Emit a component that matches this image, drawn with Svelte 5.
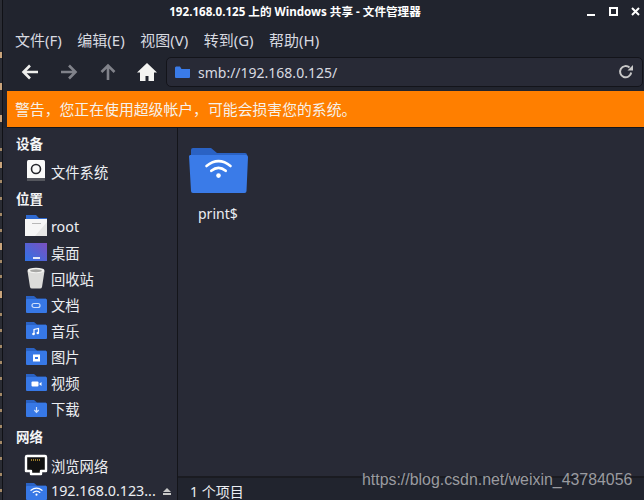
<script>
  const menus = ['文件(F)', '编辑(E)', '视图(V)', '转到(G)', '帮助(H)'];
  const big = [[52, 6], [83, 7], [115, 7], [162, 6], [243, 7], [291, 7]];
  const small = [148, 180, 197, 213, 229, 260, 275, 313, 329, 345, 361, 377, 393, 409, 425, 441, 457, 473, 489];
  const folders = [
    { name: '文档', glyph: 'link' },
    { name: '音乐', glyph: 'music' },
    { name: '图片', glyph: 'image' },
    { name: '视频', glyph: 'video' },
    { name: '下载', glyph: 'down' }
  ];
</script>

{#snippet wifi(cx, cy, s)}
  <g fill="none" stroke="#fff" stroke-linecap="round" stroke-width={2.2 * s}>
    <path d="M{cx - 10 * s} {cy - 5 * s}Q{cx} {cy - 13 * s} {cx + 10 * s} {cy - 5 * s}" />
    <path d="M{cx - 6 * s} {cy - 1 * s}Q{cx} {cy - 6 * s} {cx + 6 * s} {cy - 1 * s}" />
  </g>
  <circle {cx} cy={cy + 3 * s} r={1.9 * s} fill="#fff" />
{/snippet}

{#snippet smallFolder(glyph)}
  <svg class="icon" width="24" height="20" viewBox="0 0 24 20">
    <path d="M2 16V2h8l3 2.500h9V16z" fill="#2a62c4" />
    <rect x="2" y="5" width="21" height="14" rx="1" fill="#3778e6" />
    {#if glyph === 'link'}
      <rect x="8" y="9.500" width="8" height="4" rx="2" fill="none" stroke="#cfe0fb" stroke-width="1.200" />
    {:else if glyph === 'music'}
      <path d="M10 14V9.500l4.500-1V13" fill="none" stroke="#fff" stroke-width="1.200" />
      <circle cx="9.500" cy="14" r="1.300" fill="#fff" /><circle cx="13.800" cy="13" r="1.300" fill="#fff" />
    {:else if glyph === 'image'}
      <rect x="9" y="8.500" width="7" height="7" fill="#fff" />
      <rect x="11" y="11" width="3" height="2" fill="#3778e6" />
    {:else if glyph === 'video'}
      <rect x="7.500" y="9.500" width="7" height="5" rx="1" fill="#fff" />
      <path d="M15 12l2.500-2v4z" fill="#fff" />
    {:else if glyph === 'down'}
      <path d="M12.500 9v5M10.300 12l2.200 2.300 2.200-2.300" fill="none" stroke="#cfe0fb" stroke-width="1.200" />
    {:else if glyph === 'wifi'}
      {@render wifi(12.500, 12, 0.55)}
    {/if}
  </svg>
{/snippet}

<div class="screen">
  <svg class="strip" width="7" height="500" viewBox="0 0 7 500">
    <rect width="2" height="500" fill="#2a2c34" />
    <rect x="2" width="1" height="500" fill="#101116" />
    <rect x="3" width="4" height="128" fill="#22252f" />
    <rect x="3" y="128" width="4" height="372" fill="#272935" />
    {#each big as [y, h]}
      <rect x="0" {y} width="2" height={h} fill="#c9a47c" />
    {/each}
    {#each small as y}
      <rect x="0" {y} width="2" height="3" fill="#a58a68" />
    {/each}
  </svg>

  <div class="window">
    <header class="top">
      <div class="titlebar">
        <span class="title">192.168.0.125 上的 Windows 共享 - 文件管理器</span>
        <div class="controls">
          <svg width="9" height="9" viewBox="0 0 9 9"><rect y="7" width="8" height="2" fill="#fff" /></svg>
          <svg width="9" height="9" viewBox="0 0 9 9"><rect x="1" y="1" width="7" height="7" fill="none" stroke="#fff" stroke-width="2" /></svg>
          <svg width="9" height="9" viewBox="0 0 9 9"><path d="M1 1l7 7M8 1l-7 7" stroke="#fff" stroke-width="2" /></svg>
        </div>
      </div>

      <nav class="menubar">
        {#each menus as m}<span>{m}</span>{/each}
      </nav>

      <div class="toolbar">
        <button class="tool" aria-label="后退">
          <svg width="20" height="20" viewBox="0 0 20 20"><path d="M18 10H4M10 3.500L3.500 10l6.500 6.500" fill="none" stroke="#eeeeec" stroke-width="2.600" /></svg>
        </button>
        <button class="tool" aria-label="前进">
          <svg width="20" height="20" viewBox="0 0 20 20"><path d="M2 10h14M10 3.500L16.500 10 10 16.500" fill="none" stroke="#80828a" stroke-width="2.600" /></svg>
        </button>
        <button class="tool" aria-label="上级">
          <svg width="20" height="20" viewBox="0 0 20 20"><path d="M10 18V4M3.500 10L10 3.500l6.500 6.500" fill="none" stroke="#80828a" stroke-width="2.600" /></svg>
        </button>
        <button class="tool" aria-label="主目录">
          <svg width="22" height="20" viewBox="0 0 22 20"><path d="M11 1L1 10.500h3V19h5.500v-5h3v5H18v-8.500h3z" fill="#f4f4f2" /></svg>
        </button>
        <div class="location">
          <svg width="15" height="12" viewBox="0 0 15 12"><path d="M0 1.500V11a1 1 0 001 1h13a1 1 0 001-1V3H6.500L5 .500H1z" fill="#3a7be8" /></svg>
          <span class="path">smb://192.168.0.125/</span>
          <svg class="reload" width="16" height="16" viewBox="0 0 16 16"><path d="M13.200 8.500A5.600 5.600 0 1 1 11.500 3.600" fill="none" stroke="#c8c8c8" stroke-width="2" /><path d="M9.500 6.500H15V1z" fill="#c8c8c8" /></svg>
        </div>
      </div>
    </header>

    <div class="warning">警告，您正在使用超级帐户，可能会损害您的系统。</div>

    <div class="body">
      <aside class="sidebar">
        <div class="heading first">设备</div>
        <div class="row">
          <svg class="icon" width="24" height="24" viewBox="0 0 24 24">
            <rect x="3" y="1" width="18" height="21" rx="1.500" fill="#fafafa" />
            <rect x="3" y="19" width="18" height="3" fill="#55575e" />
            <circle cx="12" cy="10" r="4.500" fill="none" stroke="#26272d" stroke-width="1.600" />
          </svg>
          <span>文件系统</span>
        </div>

        <div class="heading places">位置</div>
        <div class="row">
          <svg class="icon" width="24" height="24" viewBox="0 0 24 24">
            <path d="M2 12V1h10l3 3h8v8z" fill="#2f6ad2" />
            <rect x="1" y="5" width="22" height="17" fill="#f6f6f6" />
            <path d="M23 8v14H11z" fill="#e6e6e6" />
            <rect x="8" y="9" width="9" height="1" fill="#b8b8b8" />
          </svg>
          <span>root</span>
        </div>
        <div class="row">
          <svg class="icon" width="24" height="24" viewBox="0 0 24 24">
            <defs>
              <linearGradient id="desk" x1="0" y1="1" x2="1" y2="0">
                <stop offset="0" stop-color="#2f73e6" /><stop offset="1" stop-color="#7c4fc0" />
              </linearGradient>
            </defs>
            <rect x="1" y="3" width="22" height="18" fill="url(#desk)" />
            <rect x="9" y="17" width="7" height="2" fill="#e4e8f8" />
          </svg>
          <span>桌面</span>
        </div>
        <div class="row">
          <svg class="icon" width="24" height="24" viewBox="0 0 24 24">
            <path d="M3.500 5L6 21a2 2 0 002 1.500h8a2 2 0 002-1.500l2.500-16z" fill="#dcdcda" />
            <ellipse cx="12" cy="4.500" rx="8.500" ry="2.700" fill="#f2f2f0" />
            <ellipse cx="12" cy="4.800" rx="6" ry="1.500" fill="#a8a8a6" />
          </svg>
          <span>回收站</span>
        </div>
        {#each folders as f}
          <div class="row">
            {@render smallFolder(f.glyph)}
            <span>{f.name}</span>
          </div>
        {/each}

        <div class="heading network">网络</div>
        <div class="row">
          <svg class="icon" width="24" height="22" viewBox="0 0 24 22">
            <path d="M2 3a1 1 0 011-1h18a1 1 0 011 1v14h-5v3H7v-3H2z" fill="#111" stroke="#fff" stroke-width="2.400" stroke-linejoin="round" />
            <path d="M7 6h10" stroke="#c9a035" stroke-width="1.500" stroke-dasharray="1 1" />
          </svg>
          <span>浏览网络</span>
        </div>
        <div class="row last">
          {@render smallFolder('wifi')}
          <span class="ellipsis">192.168.0.123...</span>
          <svg class="eject" width="8" height="7" viewBox="0 0 8 7"><path d="M4 0L8 4H0z" fill="#c8c8c8" /><rect y="5" width="8" height="2" fill="#c8c8c8" /></svg>
        </div>
      </aside>

      <main class="content">
        <div class="files">
          <div class="file">
            <svg width="60" height="46" viewBox="0 0 60 46">
              <path d="M2 30V2a2 2 0 012-2h18l6 5h28a2 2 0 012 2v23z" fill="#2a62c4" />
              <path d="M1 7h56a2 2 0 012 2l-1.500 34a2 2 0 01-2 2H4a2 2 0 01-2-2L0 8z" fill="#3a7be8" />
              {@render wifi(29.500, 24, 1.200)}
            </svg>
            <span>print$</span>
          </div>
        </div>
        <footer class="status">1 个项目</footer>
      </main>
    </div>
  </div>

  <div class="watermark">https://blog.csdn.net/weixin_43784056</div>
</div>

<style>
  :global(body) {
    margin: 0;
    background: #282a36;
  }

  .screen {
    position: relative;
    display: flex;
    width: 644px;
    height: 500px;
    overflow: hidden;
    font-family: "Noto Sans", "Noto Sans CJK SC", sans-serif;
    font-size: 14px;
    color: #eceef2;
  }

  .strip {
    flex: none;
    display: block;
  }

  .window {
    flex: 1;
    min-width: 0;
    display: flex;
    flex-direction: column;
    background: #282a36;
  }

  .top {
    height: 91px;
    flex: none;
    background: #21242e;
  }

  .titlebar {
    position: relative;
    height: 22px;
    display: flex;
    align-items: center;
    justify-content: center;
    font-size: 11.600px;
    font-weight: 700;
    color: #fff;
  }

  .title {
    margin-right: 61px;
  }

  .controls {
    position: absolute;
    right: 4px;
    top: 7px;
    display: flex;
    gap: 13px;
  }

  .controls svg {
    display: block;
  }

  .menubar {
    height: 34px;
    display: flex;
    align-items: center;
    gap: 15.500px;
    padding-left: 8px;
    color: #d8dae0;
    font-size: 15px;
  }

  .toolbar {
    display: flex;
    align-items: center;
    height: 30px;
    padding: 1px 1px 0 13px;
  }

  .tool {
    width: 39px;
    height: 30px;
    flex: none;
    padding: 0;
    border: 0;
    background: none;
    display: flex;
    align-items: center;
    justify-content: flex-start;
  }

  .tool:last-of-type {
    width: 30px;
    margin-left: -1px;
  }

  .location {
    flex: 1;
    height: 28px;
    display: flex;
    align-items: center;
    gap: 8px;
    padding: 0 8px;
    background: #282a36;
    border: 1px solid #13141a;
    border-radius: 5px;
    color: #d8dae0;
  }

  .path {
    flex: 1;
    font-size: 14px;
  }

  .warning {
    flex: none;
    height: 36px;
    line-height: 36px;
    padding-left: 8px;
    background: #ff7f00;
    border-bottom: 1px solid #14151a;
    color: #f6f1ea;
    font-size: 14.850px;
  }

  .body {
    flex: 1;
    min-height: 0;
    display: flex;
  }

  .sidebar {
    width: 171px;
    flex: none;
    box-sizing: border-box;
    border-right: 1px solid #14151a;
    padding-top: 3px;
  }

  .heading {
    height: 28px;
    line-height: 28px;
    padding-left: 9px;
    font-weight: 700;
    font-size: 13.500px;
    color: #f4f5f7;
  }

  .heading.first {
    height: 27px;
    line-height: 27px;
  }

  .heading.places {
    margin-top: 1px;
  }

  .heading.network {
    height: 29px;
    margin-top: 2px;
  }

  .row {
    height: 26px;
    display: flex;
    align-items: center;
    padding-left: 17px;
    position: relative;
    font-size: 14.300px;
  }

  .row > span {
    margin-left: 27px;
    white-space: nowrap;
  }

  .row .icon {
    position: absolute;
    left: 17px;
    top: 50%;
    transform: translateY(-50%);
  }

  .last {
    height: 25px;
  }

  .eject {
    position: absolute;
    left: 156px;
    top: 10px;
  }

  .content {
    flex: 1;
    min-width: 0;
    display: flex;
    flex-direction: column;
  }

  .files {
    flex: 1;
    padding: 20px 0 0 11px;
  }

  .file {
    width: 60px;
    display: flex;
    flex-direction: column;
    align-items: flex-start;
    gap: 10px;
  }

  .file svg {
    display: block;
  }

  .file span {
    margin-left: 9px;
  }

  .status {
    flex: none;
    height: 24px;
    line-height: 28px;
    box-sizing: border-box;
    border-top: 2px solid #1a1b21;
    background: #21242e;
    padding-left: 12px;
  }

  .watermark {
    position: absolute;
    left: 362px;
    top: 471px;
    font-family: "Liberation Sans", sans-serif;
    font-size: 15.900px;
    color: #9a9ba0;
    white-space: nowrap;
  }
</style>
